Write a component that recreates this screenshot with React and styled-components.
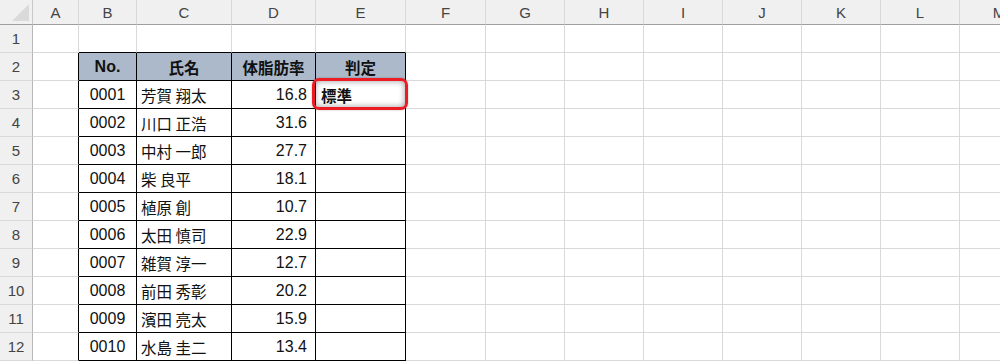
import React from 'react'
import styled, { createGlobalStyle } from 'styled-components'

const GlobalStyle = createGlobalStyle`
  body {
    margin: 0;
    background: #ffffff;
    font-family: "Noto Sans CJK JP", "Liberation Sans", sans-serif;
    overflow: hidden;
  }
`

const COLS = [
  { key: 'A', width: 46 },
  { key: 'B', width: 58 },
  { key: 'C', width: 95 },
  { key: 'D', width: 84 },
  { key: 'E', width: 90 },
  { key: 'F', width: 80 },
  { key: 'G', width: 79 },
  { key: 'H', width: 79 },
  { key: 'I', width: 79 },
  { key: 'J', width: 79 },
  { key: 'K', width: 79 },
  { key: 'L', width: 79 },
  { key: 'M', width: 79 },
]

const rows = [
  ['0001', '芳賀 翔太', '16.8'],
  ['0002', '川口 正浩', '31.6'],
  ['0003', '中村 一郎', '27.7'],
  ['0004', '柴 良平', '18.1'],
  ['0005', '植原 創', '10.7'],
  ['0006', '太田 慎司', '22.9'],
  ['0007', '雑賀 淳一', '12.7'],
  ['0008', '前田 秀彰', '20.2'],
  ['0009', '濱田 亮太', '15.9'],
  ['0010', '水島 圭二', '13.4'],
]

const Sheet = styled.div`
  display: grid;
  grid-template-columns: 33px ${COLS.map((c) => c.width + 'px').join(' ')};
  grid-template-rows: 25px repeat(12, 28px);
  width: 1000px;
  height: 362px;
  overflow: hidden;
`

const Corner = styled.div`
  position: relative;
  background: #f0f0f0;
  border-right: 1px solid #c8c8c8;
  border-bottom: 1px solid #9f9f9f;
  box-sizing: border-box;
  &::after {
    content: '';
    position: absolute;
    right: 3px;
    bottom: 3px;
    width: 0;
    height: 0;
    border-left: 17px solid transparent;
    border-bottom: 17px solid #dadada;
  }
`

const ColHead = styled.div`
  display: flex;
  align-items: center;
  justify-content: center;
  background: #f0f0f0;
  border-right: 1px solid #d9d9d9;
  border-bottom: 1px solid #9f9f9f;
  box-sizing: border-box;
  color: #444;
  font-family: "Liberation Sans", "Noto Sans CJK JP", sans-serif;
  font-size: 15px;
  padding-top: 1px;
`

const RowHead = styled.div`
  display: flex;
  align-items: center;
  justify-content: center;
  background: #f0f0f0;
  border-right: 1px solid #b8b8b8;
  border-bottom: 1px solid #d9d9d9;
  box-sizing: border-box;
  color: #444;
  font-family: "Liberation Sans", "Noto Sans CJK JP", sans-serif;
  font-size: 15px;
`

const Cell = styled.div`
  position: relative;
  display: flex;
  align-items: center;
  justify-content: ${(p) => (p.$align === 'right' ? 'flex-end' : p.$align === 'center' ? 'center' : 'flex-start')};
  padding: 0 ${(p) => (p.$align === 'right' ? '8px' : '4px')};
  box-sizing: border-box;
  background: ${(p) => (p.$head ? '#acb9ca' : '#ffffff')};
  border-right: 1px solid ${(p) => (p.$edgeRight ? '#000' : '#d9d9d9')};
  border-bottom: 1px solid ${(p) => (p.$edgeBottom ? '#000' : '#d9d9d9')};
  color: #111;
  font-size: 15.5px;
  font-weight: ${(p) => (p.$bold ? 700 : 400)};
  white-space: nowrap;
  z-index: ${(p) => (p.$raised ? 2 : 'auto')};
`

const Num = styled.span`
  font-family: "Liberation Sans", "Noto Sans CJK JP", sans-serif;
  font-size: 16px;
`

const Callout = styled.div`
  position: absolute;
  left: -4px;
  top: -3px;
  right: -3px;
  bottom: -2px;
  border: 3.5px solid #ec1c24;
  border-radius: 7px;
  box-shadow: inset 0 0 6px rgba(0, 0, 0, 0.4), 0 0 2px rgba(0, 0, 0, 0.3);
  pointer-events: none;
`

const Label = styled.span`
  position: relative;
  font-weight: 700;
  padding-left: 1px;
`

function cellFor(rowNo, colIdx) {
  const col = COLS[colIdx].key
  const inTable = rowNo >= 2 && colIdx >= 1 && colIdx <= 4
  const props = {
    $edgeRight: inTable || (rowNo >= 2 && colIdx === 0),
    $edgeBottom: inTable || (rowNo === 1 && colIdx >= 1 && colIdx <= 4),
  }
  if (!inTable) return <Cell key={col + rowNo} {...props} />
  if (rowNo === 2) {
    const heads = ['No.', '氏名', '体脂肪率', '判定']
    return (
      <Cell key={col + rowNo} {...props} $head $bold $align="center">
        {colIdx === 1 ? <Num>{heads[0]}</Num> : heads[colIdx - 1]}
      </Cell>
    )
  }
  const data = rows[rowNo - 3]
  if (colIdx === 1)
    return (
      <Cell key={col + rowNo} {...props} $align="center">
        <Num>{data[0]}</Num>
      </Cell>
    )
  if (colIdx === 2)
    return (
      <Cell key={col + rowNo} {...props}>
        {data[1]}
      </Cell>
    )
  if (colIdx === 3)
    return (
      <Cell key={col + rowNo} {...props} $align="right">
        <Num>{data[2]}</Num>
      </Cell>
    )
  const selected = rowNo === 3
  return (
    <Cell key={col + rowNo} {...props} $raised={selected}>
      {selected && (
        <>
          <Callout />
          <Label>標準</Label>
        </>
      )}
    </Cell>
  )
}

const App = () => {
  const rowNums = Array.from({ length: 12 }, (_, i) => i + 1)
  return (
    <>
      <GlobalStyle />
      <Sheet>
        <Corner />
        {COLS.map((c) => (
          <ColHead key={c.key}>{c.key}</ColHead>
        ))}
        {rowNums.map((r) => (
          <React.Fragment key={r}>
            <RowHead>{r}</RowHead>
            {COLS.map((c, i) => cellFor(r, i))}
          </React.Fragment>
        ))}
      </Sheet>
    </>
  )
}

export default App
